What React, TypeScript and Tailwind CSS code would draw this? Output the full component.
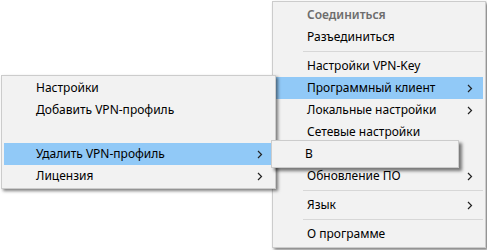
import React from 'react';

type Item =
  | { kind: 'item'; label: string; sub?: boolean; active?: boolean; disabled?: boolean }
  | { kind: 'sep' }
  | { kind: 'blank' };

const mainItems: Item[] = [
  { kind: 'item', label: 'Соединиться', disabled: true },
  { kind: 'item', label: 'Разъединиться' },
  { kind: 'sep' },
  { kind: 'item', label: 'Настройки VPN-Key' },
  { kind: 'item', label: 'Программный клиент', sub: true, active: true },
  { kind: 'item', label: 'Локальные настройки', sub: true },
  { kind: 'item', label: 'Сетевые настройки' },
  // строка под подменю "B" — её не видно
  { kind: 'blank' },
  { kind: 'item', label: 'Обновление ПО', sub: true },
  { kind: 'sep' },
  { kind: 'item', label: 'Язык', sub: true },
  { kind: 'sep' },
  { kind: 'item', label: 'О программе' },
];

const clientItems: Item[] = [
  { kind: 'item', label: 'Настройки' },
  { kind: 'item', label: 'Добавить VPN-профиль' },
  { kind: 'blank' },
  { kind: 'item', label: 'Удалить VPN-профиль', sub: true, active: true },
  { kind: 'item', label: 'Лицензия', sub: true },
];

function Chevron() {
  return (
    <svg width="6" height="9" viewBox="0 0 6 9" className="shrink-0">
      <polyline points="1,1 4.5,4.5 1,8" fill="none" stroke="#222" strokeWidth="1.2" />
    </svg>
  );
}

function Menu({ items, className }: { items: Item[]; className: string }) {
  return (
    <div
      className={`absolute flex flex-col bg-[#f2f2f2] border border-[#cccccc] shadow-[2px_2px_3px_rgba(0,0,0,0.5)] ${className}`}
    >
      {items.map((it, i) => {
        if (it.kind === 'sep') {
          return (
            <div key={i} className="h-[7px] flex items-center pl-[30px] pr-[2px]">
              <div className="h-px w-full bg-[#d7d7d7]" />
            </div>
          );
        }
        if (it.kind === 'blank') return <div key={i} className="h-[22px]" />;
        return (
          <div
            key={i}
            className={`h-[22px] mx-[2px] flex items-center pl-[32px] pr-[10px] ${
              it.active ? 'bg-[#91c9f7]' : ''
            }`}
          >
            <span
              className={`flex-1 whitespace-nowrap ${
                it.disabled ? 'text-[#6d6d6d] font-semibold' : 'text-black'
              }`}
            >
              {it.label}
            </span>
            {it.sub && <Chevron />}
          </div>
        );
      })}
    </div>
  );
}

export default function App() {
  return (
    <div
      className="relative w-[487px] h-[250px] bg-white overflow-hidden text-[12px] leading-none"
      style={{ fontFamily: '"Noto Sans", "Liberation Sans", sans-serif' }}
    >
      {/* главное меню */}
      <Menu items={mainItems} className="left-[272px] top-[1px] w-[214px] py-[2px]" />

      {/* Программный клиент */}
      <Menu items={clientItems} className="left-[1px] top-[75px] w-[275px] py-[1px]" />

      {/* Удалить VPN-профиль */}
      <div className="absolute left-[271px] top-[140px] w-[188px] h-[28px] bg-[#f2f2f2] border border-[#cccccc] shadow-[3px_3px_3px_rgba(0,0,0,0.5)] py-[2px]">
        <div className="h-[22px] flex items-center pl-[33px] text-black">B</div>
      </div>
    </div>
  );
}
